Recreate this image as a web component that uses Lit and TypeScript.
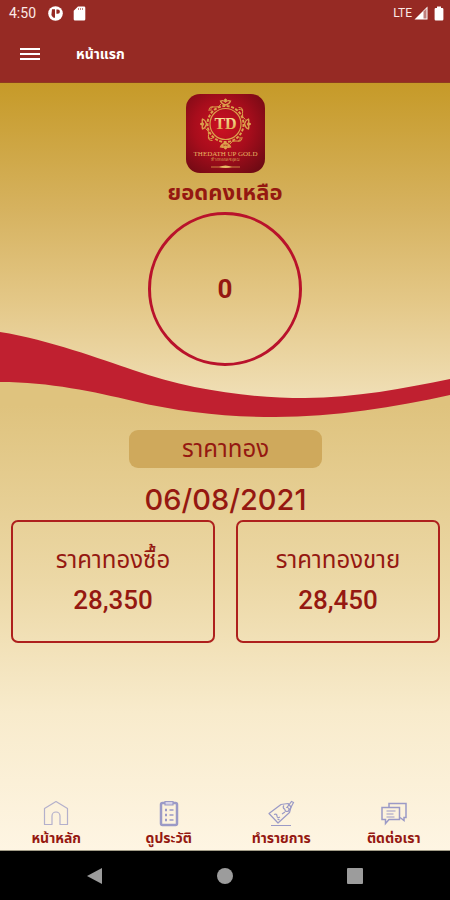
import { LitElement, html, css, svg } from "lit";
import { customElement, property } from "lit/decorators.js";

const thai = css`"Liberation Sans", "Noto Sans Thai", "Noto Sans", sans-serif`;

@customElement("status-bar")
class StatusBar extends LitElement {
  static styles = css`
    :host {
      display: flex;
      align-items: center;
      height: 26px;
      padding: 0 6px 0 9px;
      color: #fbe9e6;
      font: 14px/26px Roboto, sans-serif;
    }
    .time { margin-right: 12px; }
    .left { margin-right: 10px; }
    .lte { margin-left: auto; margin-right: 2px; font-size: 12px; }
    .signal { margin-right: 6px; }
    svg { display: block; }
  `;
  render() {
    return html`
      <span class="time">4:50</span>
      <svg class="left" width="15" height="15" viewBox="0 0 15 15">
        <circle cx="7.5" cy="7.5" r="7.3" fill="#fff" />
        <path d="M4 3.2h3v8.6H5.6Q4 10.8 3.4 9zM8.4 3.6h1.4a2 2 0 0 1 0 4.2H8.4z" fill="#962a24" />
      </svg>
      <svg width="13" height="15" viewBox="0 0 13 15">
        <path d="M5 .5h6a1.3 1.3 0 0 1 1.3 1.3v11.4a1.3 1.3 0 0 1-1.3 1.3H2A1.3 1.3 0 0 1 .7 13.200V4.800z" fill="#fff" />
        <path d="M5.500 2v2M7.500 2v2M9.500 2v2" stroke="#962a24" stroke-opacity=".55" />
      </svg>
      <span class="lte">LTE</span>
      <svg class="signal" width="14" height="14" viewBox="0 0 14 14">
        <path d="M13.500 .5V13.500H.5z" fill="#fff" />
        <path d="M9.500 5.500L12.500 2.500V12.500H9.500z" fill="#962a24" fill-opacity=".6" />
      </svg>
      <svg width="10" height="15" viewBox="0 0 10 15">
        <path d="M3 .5h4v1.500h1.200a1.200 1.200 0 0 1 1.200 1.200v10a1.200 1.200 0 0 1-1.200 1.200H1.800A1.200 1.200 0 0 1 .6 13.200v-10A1.200 1.200 0 0 1 1.800 2H3z" fill="#fff" />
      </svg>
    `;
  }
}

@customElement("brand-logo")
class BrandLogo extends LitElement {
  static styles = css`
    :host { display: block; }
    svg { display: block; }
    .mono { font: bold 16px "Liberation Serif", serif; }
    .name { font: 7px "Liberation Serif", serif; }
    .sub { font: 4px "Liberation Serif", serif; }
  `;
  render() {
    return html`
      <svg width="79" height="79" viewBox="0 0 79 79" role="img" aria-label="TD">
        <defs>
          <radialGradient id="red" cx=".45" cy=".42" r=".7">
            <stop offset="0" stop-color="#cc1122" />
            <stop offset=".5" stop-color="#a80d1c" />
            <stop offset="1" stop-color="#700a14" />
          </radialGradient>
          <linearGradient id="gold" x1="0" y1="0" x2="0" y2="1">
            <stop offset="0" stop-color="#fdeba8" />
            <stop offset="1" stop-color="#dca244" />
          </linearGradient>
        </defs>
        <rect width="79" height="79" rx="14" fill="url(#red)" />
        <g fill="none" stroke="#dca24c">
          <circle cx="39.500" cy="30" r="15.500" stroke-width="1.200" />
          <circle cx="39.500" cy="30" r="18" stroke-width="2" stroke-dasharray="3 1.500" />
          ${[0, 90, 180, 270].map(
            (a) => svg`<g transform="rotate(${a} 39.500 30)">
              <path d="M39.500 11q-4-1-5-4 3-1 5 1 2-2 5-1-1 3-5 4z" stroke-width="1.300" />
              <path d="M25 17q-1-5 4-4 4 1 6-3M27 13q-4-1-4 4" stroke-width="1" />
              <circle cx="39.500" cy="6" r="1" fill="#e8bd66" />
            </g>`
          )}
          <path d="M35 52q4.500-3 9 0q-4.500 3-9 0z" />
          <path d="M25 73h29" stroke-width=".8" />
          <path d="M33 73q6.500-3 13 0q-6.500 2-13 0z" fill="#e8bd66" stroke="none" />
        </g>
        <text class="mono" x="39.500" y="35" text-anchor="middle" fill="url(#gold)">TD</text>
        <text class="name" x="39.500" y="62" text-anchor="middle" fill="#e9b662">THEDATH UP GOLD</text>
        <text class="sub" x="39.500" y="67" text-anchor="middle" fill="#d89c50">ห้างทองเดชอุดม</text>
      </svg>
    `;
  }
}

@customElement("price-card")
class PriceCard extends LitElement {
  @property() label = "";
  @property() value = "";
  static styles = css`
    :host {
      display: flex;
      flex-direction: column;
      align-items: center;
      flex: 1;
      box-sizing: border-box;
      padding: 18px 0 20px;
      border: 2px solid #ae201d;
      border-radius: 7px;
      color: #951811;
      font-family: ${thai};
    }
    .label { font-size: 24px; line-height: 40px; white-space: nowrap; }
    .value { font: 500 26px/41px Roboto, sans-serif; }
  `;
  render() {
    return html`<span class="label">${this.label}</span><span class="value">${this.value}</span>`;
  }
}

const icons = {
  home: svg`<path d="M2.500 25.500V9.500L14 2.500 25.500 9.500V25.500H18V17a4 4 0 0 0-8 0V25.500z" stroke-opacity=".75" stroke-linejoin="round" />`,
  history: svg`<rect x="6" y="4" width="16" height="22" rx="1.500" stroke-width="2.500" />
    <path d="M10 2.500h8v3.500h-8z" fill="#d6d2e6" />
    <path d="M10 11h2M10 16h2M10 21h2" stroke-width="2.500" /><path d="M14.500 11h4M14.500 16h4M14.500 21h4" stroke-width="1.600" />`,
  tag: svg`<path d="M2 14.500L14 5.500 21 4.500 24 8 22.500 13.500 11 24z" stroke-linejoin="round" />
    <path d="M18 10.500q-3-2-1-4M18 10.500a2 2 0 1 0 2-2L24.500 2.500 26.500 3.500 22.500 11" />
    <path d="M7 15.500q3-1 3 1.500t3 1M10.500 20l2 1M15 15l3-2M4 26.500h20" />`,
  chat: svg`<path d="M9 8V4.500h17V18.500h-2v3l-4-3" stroke-width="1.500" />
    <path d="M2 8.500h17.500v12H9l-3.500 4v-4H2z" stroke-width="1.500" /><path d="M6.500 12h9M6.500 15h7M6.500 18h8" />`,
};

@customElement("app-root")
class AppRoot extends LitElement {
  static styles = css`
    :host {
      display: flex;
      flex-direction: column;
      min-height: 100vh;
      color: #951811;
      font-family: ${thai};
    }
    button { border: 0; padding: 0; background: none; color: inherit; cursor: pointer; }
    svg { display: block; }
    header { background: #962a24; color: #fff; border-bottom: 1px solid #8f3a20; }
    .bar { display: flex; align-items: center; height: 56px; padding: 0 20px; gap: 36px; }
    .bar h1 { margin: 0; font-size: 14px; line-height: 24px; font-weight: 700; }
    main {
      flex: 1;
      display: flex;
      flex-direction: column;
      background: linear-gradient(#dfc37e 0, #dfc37e 42%, #ecd8a6 65%, #f8ebcc 82%, #fef5e3 100%);
    }
    .hero {
      position: relative;
      display: flex;
      flex-direction: column;
      align-items: center;
      padding: 11px 0 52px;
    }
    .wave { position: absolute; inset: 0; width: 100%; height: 100%; }
    .hero > :not(.wave) { position: relative; }
    .hero h2 { margin: 0; font-size: 22px; line-height: 39px; font-weight: 700; }
    .balance {
      display: flex;
      align-items: center;
      justify-content: center;
      box-sizing: border-box;
      width: 154px;
      height: 154px;
      border: 3px solid #b9122b;
      border-radius: 50%;
      font: 700 26px Roboto, sans-serif;
    }
    .prices { display: flex; flex-direction: column; align-items: center; padding: 12px 10px 0 11px; }
    .pill {
      margin: 0;
      width: 45%;
      border-radius: 9px;
      background: #cfa95c;
      text-align: center;
      font-size: 24px;
      line-height: 38px;
      font-weight: 400;
    }
    .date { margin-top: 12px; font: 500 29px/40px Inter, sans-serif; }
    .cards { display: flex; align-self: stretch; gap: 21px; }
    .tabs { display: flex; margin-top: auto; border-bottom: 1px solid #a39d88; }
    .tabs a {
      flex: 1;
      display: flex;
      flex-direction: column;
      align-items: center;
      color: #951811;
      font-size: 14px;
      line-height: 23px;
      font-weight: 700;
      text-decoration: none;
      white-space: nowrap;
    }
    .tabs svg { fill: none; stroke: #9b9ac6; stroke-width: 1.2; }
    .system {
      display: flex;
      justify-content: space-around;
      align-items: center;
      height: 49px;
      padding: 0 30px;
      background: #000;
    }
    .system svg { fill: #9c9c9c; }
  `;

  render() {
    const tabs = [
      ["หน้าหลัก", icons.home],
      ["ดูประวัติ", icons.history],
      ["ทำรายการ", icons.tag],
      ["ติดต่อเรา", icons.chat],
    ];
    return html`
      <header>
        <status-bar></status-bar>
        <div class="bar">
          <button aria-label="เมนู">
            <svg width="20" height="16" viewBox="0 0 20 16"><path d="M0 3h20M0 8h20M0 13h20" stroke="#fff" stroke-width="2" /></svg>
          </button>
          <h1>หน้าแรก</h1>
        </div>
      </header>
      <main>
        <section class="hero">
          <svg class="wave" viewBox="0 0 450 335" preserveAspectRatio="none" aria-hidden="true">
            <defs>
              <linearGradient id="sky" gradientUnits="userSpaceOnUse" x1="0" y1="0" x2="0" y2="315">
                <stop offset="0" stop-color="#c69a28" />
                <stop offset=".4" stop-color="#d6b25f" />
                <stop offset=".7" stop-color="#e4c888" />
                <stop offset="1" stop-color="#f0dfb6" />
              </linearGradient>
            </defs>
            <path d="M0 0H450V300L300 322 150 300 0 270z" fill="url(#sky)" />
            <path d="M0 249C50 257 100 276 133 287C190 307 250 315 305 315C355 315 405 305 450 296V312C395 324 335 334 275 334C225 334 180 329 133 318C95 309 50 299 0 299z" fill="#c02030" />
          </svg>
          <brand-logo></brand-logo>
          <h2>ยอดคงเหลือ</h2>
          <div class="balance">0</div>
        </section>
        <section class="prices">
          <h2 class="pill">ราคาทอง</h2>
          <div class="date">06/08/2021</div>
          <div class="cards">
            <price-card label="ราคาทองซื้อ" value="28,350"></price-card>
            <price-card label="ราคาทองขาย" value="28,450"></price-card>
          </div>
        </section>
        <nav class="tabs">
          ${tabs.map(
            ([label, icon]) => html`<a href="#"><svg width="28" height="28" viewBox="0 0 28 28">${icon}</svg>${label}</a>`
          )}
        </nav>
      </main>
      <footer class="system">
        <button aria-label="Back"><svg width="18" height="18" viewBox="0 0 18 18"><path d="M1 9L16 1V17z" /></svg></button>
        <button aria-label="Home"><svg width="18" height="18" viewBox="0 0 18 18"><circle cx="9" cy="9" r="8" /></svg></button>
        <button aria-label="Overview"><svg width="18" height="18" viewBox="0 0 18 18"><rect x="1" y="1" width="16" height="16" rx="1" /></svg></button>
      </footer>
    `;
  }
}
